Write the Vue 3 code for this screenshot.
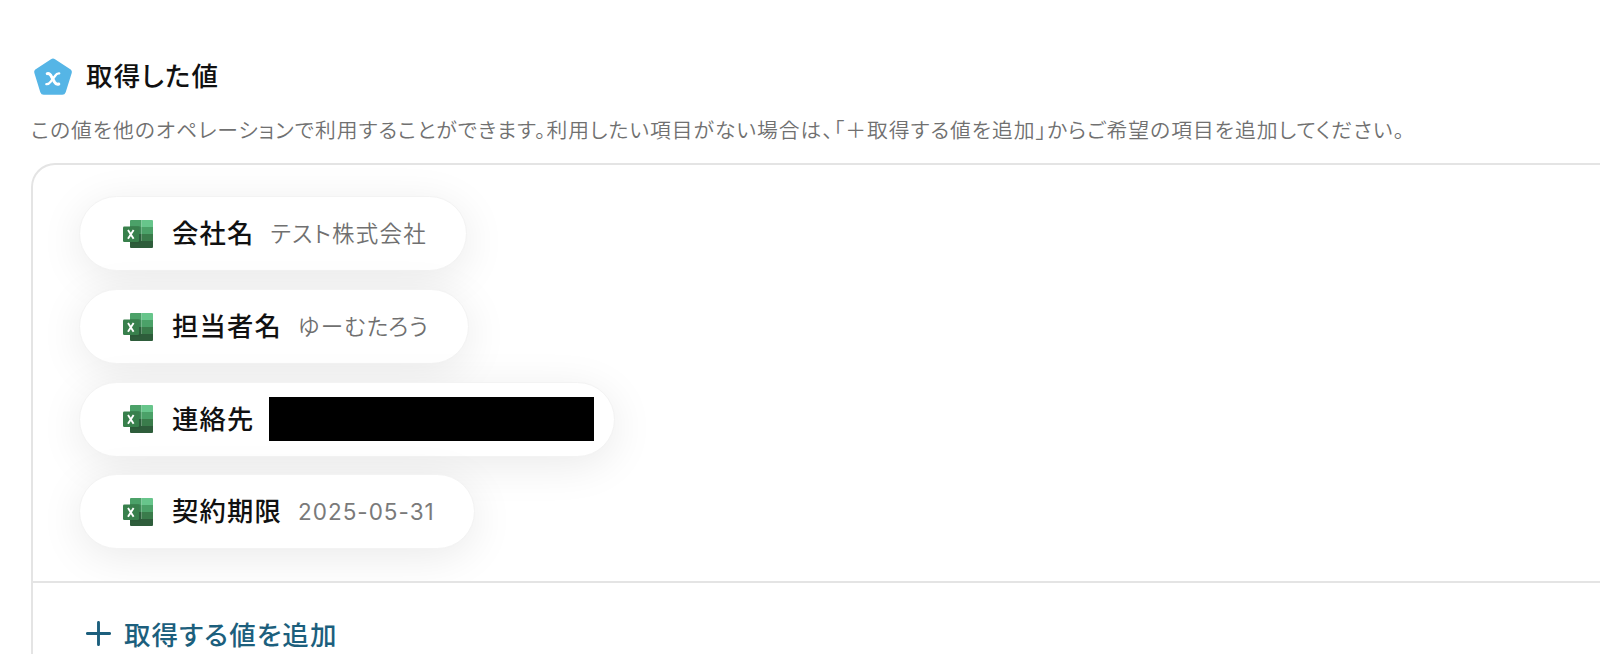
<template>
  <div class="page">
    <div class="heading">
      <svg class="logo" width="38" height="38" viewBox="0 0 38 38">
        <path d="M17 1.2 Q19 0 21 1.2 L36.7 11.6 Q38.3 12.8 37.8 14.7 L31.7 34.3 Q30.8 36.8 28.3 36.8 L9.7 36.8 Q7.2 36.8 6.3 34.3 L0.3 14.7 Q-0.3 12.8 1.3 11.6 Z" fill="#55b5e6" />
        <path d="M13.200 15.600 C15.300 15 16.200 16 17.300 18.200 L20.300 23.800 C21.600 26.100 22.800 26.700 24.800 26" fill="none" stroke="#fff" stroke-width="3" stroke-linecap="round" />
        <path d="M25.200 15.400 C23.400 15.200 22.200 16.200 20.800 18.200 L16.800 23.600 C15.300 25.600 14.200 26.400 12.400 26.100" fill="none" stroke="#fff" stroke-width="2.400" stroke-linecap="round" />
      </svg>
      <h2>取得した値</h2>
    </div>

    <p class="description">この値を他のオペレーションで利用することができます。利用したい項目がない場合は、「＋取得する値を追加」からご希望の項目を追加してください。</p>

    <div class="box">
      <div class="values">
        <div v-for="item in items" :key="item.label" class="chip">
          <svg class="excel" width="30" height="28" viewBox="0 0 30 28">
            <path d="M7 1 Q7 0 8 0 H18.5 V7 H7 Z" fill="#4ba168" />
            <path d="M18.500 0 H29 Q30 0 30 1 V7 H18.500 Z" fill="#67c58b" />
            <rect x="7" y="7" width="11.500" height="7" fill="#459660" />
            <rect x="18.500" y="7" width="11.500" height="7" fill="#4ba168" />
            <rect x="7" y="14" width="11.500" height="7" fill="#2f6340" />
            <rect x="18.500" y="14" width="11.500" height="7" fill="#3a7c4b" />
            <path d="M7 21 H30 V27 Q30 28 29 28 H8 Q7 28 7 27 Z" fill="#2e5d3b" />
            <path d="M7 6 H16 Q17.500 6 17.500 7.500 V22 Q17.500 23.500 16 23.500 H7 Z" fill="#234f31" opacity="0.3" />
            <rect x="0" y="6.500" width="16" height="15.500" rx="1.200" fill="#38804c" />
            <path d="M5 10 L10.600 18.700 M10.600 10 L5 18.700" stroke="#fff" stroke-width="1.900" />
          </svg>
          <span class="label">{{ item.label }}</span>
          <span v-if="item.hidden" class="mask"></span>
          <span v-else class="value" :class="{ date: item.isDate }">{{ item.value }}</span>
        </div>
      </div>

      <button class="add">
        <svg width="25" height="25" viewBox="0 0 25 25">
          <path d="M12.500 1.400 V23.600 M1.400 12.500 H23.600" stroke="#1c5f7d" stroke-width="2.900" stroke-linecap="round" />
        </svg>
        <span>取得する値を追加</span>
      </button>
    </div>
  </div>
</template>

<script setup>
import { ref } from 'vue'

const items = ref([
  { label: '会社名', value: 'テスト株式会社' },
  { label: '担当者名', value: 'ゆーむたろう' },
  { label: '連絡先', hidden: true },
  { label: '契約期限', value: '2025-05-31', isDate: true }
])
</script>

<style>
  body{
    background: #fff;
    overflow: hidden;
  }
</style>

<style scoped>
  .page{
    box-sizing: border-box;
    width: 100%;
    height: 654px;
    padding: 58px 0 0 31px;
    overflow: hidden;
    font-family: Inter, "Noto Sans CJK JP", sans-serif;
    font-feature-settings: "palt";
    color: #111;
  }
  .heading{
    display: flex;
    align-items: center;
    gap: 14px;
    height: 38px;
    padding-left: 3px;
  }
  .logo{
    overflow: visible;
  }
  h2{
    margin: -2px 0 0;
    font-size: 26.500px;
    font-weight: 500;
    line-height: 38px;
    letter-spacing: 1.200px;
  }
  .description{
    margin: 19px 0 0;
    height: 32px;
    line-height: 32px;
    font-size: 20.800px;
    font-weight: 350;
    letter-spacing: 1px;
    white-space: nowrap;
    color: #707070;
  }
  .box{
    margin-top: 16px;
    height: 600px;
    border: 2px solid #e4e4e4;
    border-right: none;
    border-radius: 24px 0 0 0;
  }
  .values{
    display: flex;
    flex-direction: column;
    align-items: flex-start;
    gap: 17.700px;
    height: 418px;
    box-sizing: border-box;
    padding: 31.400px 0 0 46px;
    overflow: hidden;
    border-bottom: 2px solid #e4e4e4;
  }
  .chip{
    display: flex;
    align-items: center;
    box-sizing: border-box;
    height: 75px;
    padding: 0 39px 0 43px;
    border: 1px solid #f3f3f3;
    border-radius: 38px;
    background: #fff;
    box-shadow: 0 8px 44px rgba(0, 0, 0, 0.085);
  }
  .label{
    margin: -4px 0 0 19px;
    font-size: 26.300px;
    font-weight: 500;
    letter-spacing: 1.200px;
  }
  .value{
    margin: -4px 0 0 16px;
    font-size: 22.500px;
    font-weight: 350;
    letter-spacing: 1.200px;
    color: #707070;
  }
  .value.date{
    margin-top: 0;
    font-weight: 400;
    letter-spacing: 1px;
    color: #7a7a7a;
  }
  .mask{
    width: 325px;
    height: 44px;
    margin: 0 -19px 0 14px;
    background: #000;
  }
  .add{
    display: flex;
    align-items: center;
    gap: 13px;
    height: 38px;
    margin: 31px 0 0 53px;
    padding: 0;
    border: none;
    background: none;
    font: inherit;
    font-feature-settings: inherit;
    font-size: 26.500px;
    font-weight: 500;
    letter-spacing: 1.100px;
    color: #1c5f7d;
    cursor: pointer;
  }
</style>
